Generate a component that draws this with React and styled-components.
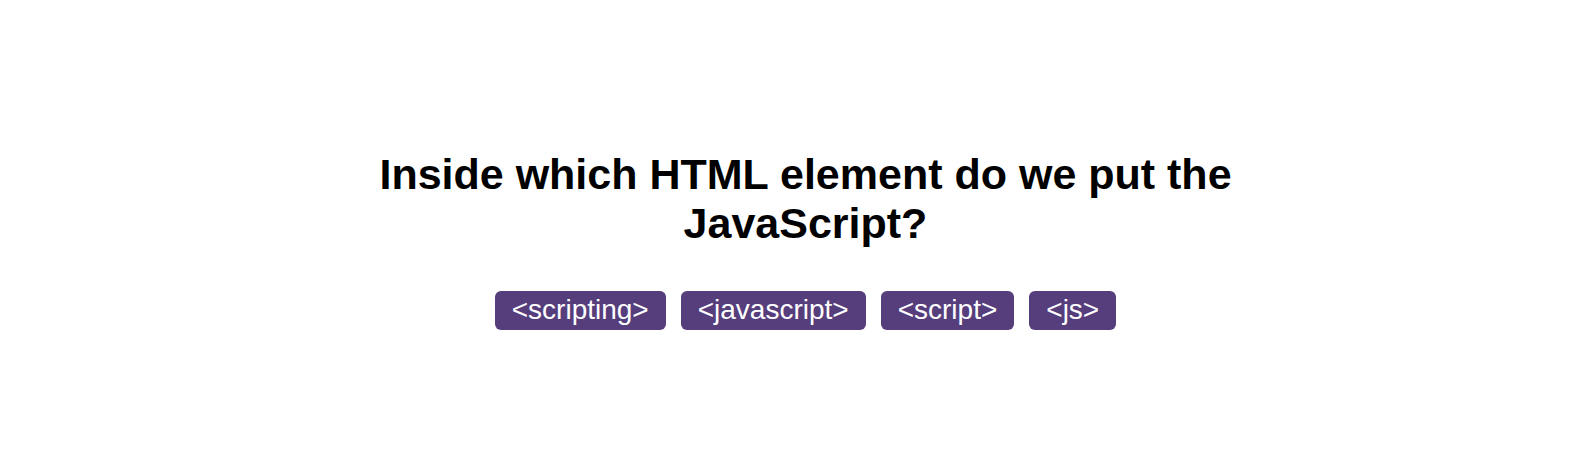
import { createGlobalStyle, styled } from "styled-components";

const Global = createGlobalStyle`
    body {
        margin: 0;
        background: #fff;
        font-family: "Liberation Sans", Arial, sans-serif;
    }
`;

const Page = styled.div`
    display: flex;
    flex-direction: column;
    align-items: center;
    padding: 150px 0 0 18px;
`;

const Question = styled.h1`
    margin: 0;
    max-width: 960px;
    font-size: 43px;
    line-height: 49px;
    font-weight: bold;
    text-align: center;
    color: #000;
`;

const Options = styled.div`
    display: flex;
    gap: 15px;
    margin-top: 43px;
`;

const Option = styled.button`
    background: #563d7c;
    color: #fff;
    border: none;
    border-radius: 6px;
    padding: 3px 17px 4px;
    font-family: "Liberation Sans", Arial, sans-serif;
    font-size: 28px;
    line-height: 32px;
    cursor: pointer;
`;

const answers = ["<scripting>", "<javascript>", "<script>", "<js>"];

export default function App() {
    return (
        <>
            <Global />
            <Page>
                <Question>Inside which HTML element do we put the JavaScript?</Question>
                <Options>
                    {answers.map(a => (
                        <Option key={a}>{a}</Option>
                    ))}
                </Options>
            </Page>
        </>
    );
}
